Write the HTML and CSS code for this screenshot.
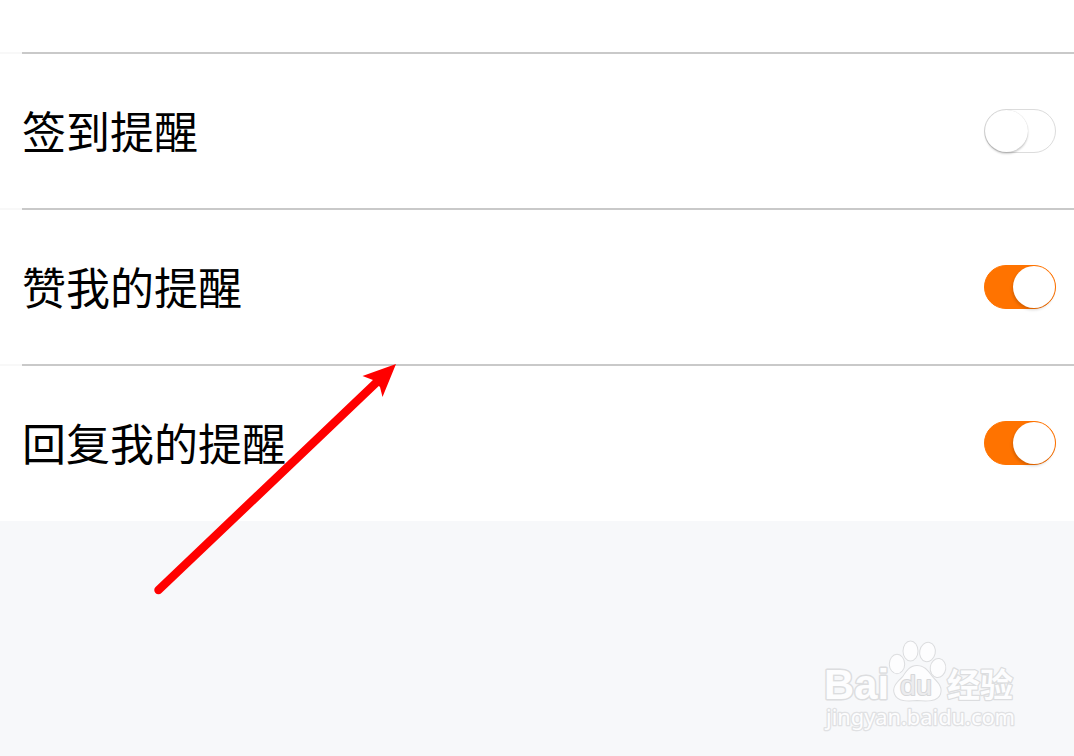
FILE: index.html
```html
<!DOCTYPE html>
<html lang="zh-CN">
<head>
<meta charset="utf-8">
<title>提醒设置</title>
<link rel="stylesheet" href="styles.css">
</head>
<body>
<main class="settings">
  <div class="spacer"></div>
  <div class="row"><span class="label">签到提醒</span><span class="switch"><i class="knob"></i></span></div>
  <div class="row"><span class="label">赞我的提醒</span><span class="switch on"><i class="knob"></i></span></div>
  <div class="row"><span class="label">回复我的提醒</span><span class="switch on"><i class="knob"></i></span></div>
</main>
<svg class="arrow" width="250" height="240" viewBox="150 360 250 240">
  <path d="M158.500 590 379 380" stroke="#f00" stroke-width="8.5" stroke-linecap="round"/>
  <path d="M396 364 362.500 376 373 380 380 387 382.500 397Z" fill="#f00"/>
</svg>
<svg class="watermark" width="204" height="106" viewBox="815 634 204 106">
  <g class="mark">
    <ellipse cx="897" cy="664" rx="7.200" ry="9.200"/>
    <ellipse cx="910.500" cy="651" rx="7" ry="9.500"/>
    <ellipse cx="927.500" cy="652" rx="7.300" ry="9.200" transform="rotate(12 927.500 652)"/>
    <ellipse cx="938" cy="668" rx="7.300" ry="9" transform="rotate(8 938 668)"/>
    <path d="M917 666C925 666 928 672 933 678C939 684 942 688 940 694C937 701 928 701 917 700C907 701 898 701 895 694C892 687 898 682 903 677C907 671 910 666 917 666Z"/>
    <text class="brand" x="824" y="699" textLength="65" lengthAdjust="spacingAndGlyphs">Bai</text>
    <text class="du" x="900" y="695" textLength="32" lengthAdjust="spacingAndGlyphs">du</text>
    <text class="cn" x="947" y="697" textLength="66" lengthAdjust="spacingAndGlyphs">经验</text>
    <text class="site" x="826" y="725" textLength="189" lengthAdjust="spacingAndGlyphs">jingyan.baidu.com</text>
  </g>
</svg>
</body>
</html>
```
FILE: styles.css
```css
body {
  margin: 0;
  height: 756px;
  position: relative;
  overflow: hidden;
  background: #f7f8fa;
  color: #000;
  font-family: "Noto Sans CJK SC", sans-serif;
}
.settings { background: #fff; height: 521px; }
.spacer { height: 52px; }
.row {
  box-sizing: border-box;
  height: 156px;
  padding: 2px 18px 0 22px;
  display: flex;
  align-items: center;
  justify-content: space-between;
  background: linear-gradient(90deg, #f8f8f8 22px, #c9c9c9 22px) 0 0 / 100% 2px no-repeat;
}
.label { font-size: 44px; line-height: 60px; padding-bottom: 2px; }
.switch {
  box-sizing: border-box;
  display: flex;
  width: 72px;
  height: 44px;
  border: 1px solid #dcdcdc;
  border-radius: 22px;
  background: #fff;
}
.knob {
  width: 43px;
  height: 42px;
  border-radius: 50%;
  background: #fff;
  box-shadow: 0 2px 2px rgba(0, 0, 0, .18), 0 0 1px rgba(0, 0, 0, .2);
}
.switch.on {
  justify-content: flex-end;
  border-color: #ff7300;
  background: #ff7300;
}
.switch.on .knob {
  width: 42px;
  box-shadow: -1px 2px 3px rgba(0, 0, 0, .16);
}
.arrow { position: absolute; left: 150px; top: 360px; fill: none; }
.watermark { position: absolute; left: 815px; top: 634px; }
.mark {
  fill: #fdfdfe;
  stroke: #dcdddf;
  stroke-width: 2;
  paint-order: stroke;
  stroke-linejoin: round;
}
.brand { font: bold 42px "Liberation Sans", sans-serif; stroke-width: 3; }
.du { font: 27px "Liberation Sans", sans-serif; fill: #ececee; stroke: #d6d7d9; stroke-width: 2; }
.cn { font: bold 33px "Noto Sans CJK SC", sans-serif; stroke-width: 2.5; }
.site { font: 21px "Noto Sans", sans-serif; stroke: #e0e1e3; stroke-width: 2.5; }
```
